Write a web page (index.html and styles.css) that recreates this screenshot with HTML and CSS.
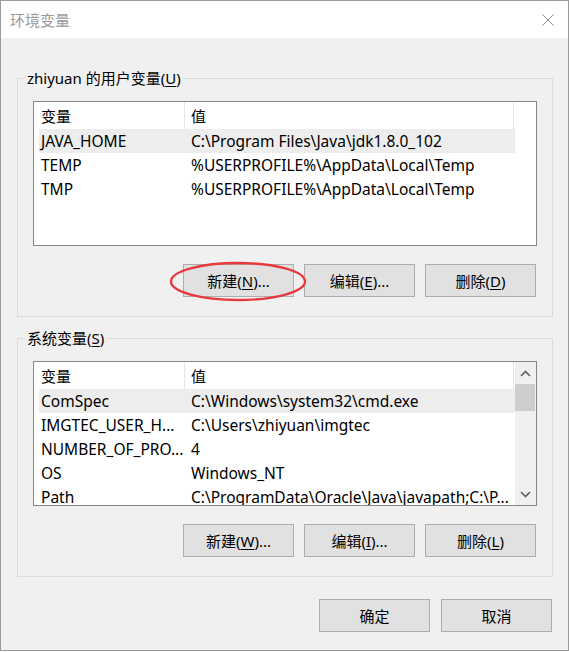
FILE: index.html
```html
<!DOCTYPE html>
<html lang="zh-CN">
<head>
<meta charset="utf-8">
<title>环境变量</title>
<link rel="stylesheet" href="styles.css">
</head>
<body>
<div class="window">
  <div class="titlebar">
    <span class="title">环境变量</span>
    <svg class="close" width="12" height="12" viewBox="0 0 12 12"><path d="M0.5 0.5 L11.5 11.5 M11.5 0.5 L0.5 11.5" stroke="#8a8a8a" stroke-width="1" fill="none"/></svg>
  </div>
  <div class="content">
    <section class="group">
      <div class="group-label">zhiyuan 的用户变量(<u>U</u>)</div>
      <div class="listview">
        <div class="lv-inner">
          <div class="lv-header">
            <div class="col c1">变量</div>
            <div class="col c2">值</div>
          </div>
          <div class="lv-row selected"><div class="col c1">JAVA_HOME</div><div class="col c2">C:\Program Files\Java\jdk1.8.0_102</div></div>
          <div class="lv-row"><div class="col c1">TEMP</div><div class="col c2">%USERPROFILE%\AppData\Local\Temp</div></div>
          <div class="lv-row"><div class="col c1">TMP</div><div class="col c2">%USERPROFILE%\AppData\Local\Temp</div></div>
        </div>
      </div>
      <div class="btn-row">
        <div class="btn-wrap">
          <button class="btn">新建(<u>N</u>)...</button>
          <svg class="annotation" width="138" height="41" viewBox="0 0 138 41"><ellipse cx="69" cy="20.5" rx="67" ry="18.5" stroke="#e8393f" stroke-width="2.4" fill="none"/></svg>
        </div>
        <button class="btn">编辑(<u>E</u>)...</button>
        <button class="btn">删除(<u>D</u>)</button>
      </div>
    </section>

    <section class="group group-system">
      <div class="group-label">系统变量(<u>S</u>)</div>
      <div class="listview">
        <div class="lv-inner">
          <div class="lv-header">
            <div class="col c1">变量</div>
            <div class="col c2">值</div>
          </div>
          <div class="lv-row selected"><div class="col c1">ComSpec</div><div class="col c2">C:\Windows\system32\cmd.exe</div></div>
          <div class="lv-row"><div class="col c1">IMGTEC_USER_H...</div><div class="col c2">C:\Users\zhiyuan\imgtec</div></div>
          <div class="lv-row"><div class="col c1">NUMBER_OF_PRO...</div><div class="col c2">4</div></div>
          <div class="lv-row"><div class="col c1">OS</div><div class="col c2">Windows_NT</div></div>
          <div class="lv-row"><div class="col c1">Path</div><div class="col c2">C:\ProgramData\Oracle\Java\javapath;C:\P...</div></div>
        </div>
        <div class="scrollbar">
          <div class="sb-arrow">
            <svg width="11" height="7" viewBox="0 0 11 7"><path d="M1 6 L5.5 1.5 L10 6" stroke="#606060" stroke-width="1.6" fill="none"/></svg>
          </div>
          <div class="sb-thumb"></div>
          <div class="sb-track"></div>
          <div class="sb-arrow">
            <svg width="11" height="7" viewBox="0 0 11 7"><path d="M1 1 L5.5 5.5 L10 1" stroke="#606060" stroke-width="1.6" fill="none"/></svg>
          </div>
        </div>
      </div>
      <div class="btn-row">
        <button class="btn">新建(<u>W</u>)...</button>
        <button class="btn">编辑(<u>I</u>)...</button>
        <button class="btn">删除(<u>L</u>)</button>
      </div>
    </section>

    <div class="dialog-buttons">
      <button class="btn">确定</button>
      <button class="btn">取消</button>
    </div>
  </div>
</div>
</body>
</html>
```

FILE: styles.css
```css
* { box-sizing: border-box; }

html, body {
  margin: 0;
  padding: 0;
  background: #ffffff;
}

body {
  width: 569px;
  height: 652px;
  overflow: hidden;
  font-family: "Noto Sans", "Noto Sans CJK SC", sans-serif;
  font-size: 15px;
  color: #000;
}

.window {
  width: 569px;
  height: 651px;
  border: 1px solid #9a9a9a;
  background: #f0f0f0;
  display: flex;
  flex-direction: column;
}

.titlebar {
  height: 37px;
  background: #ffffff;
  display: flex;
  align-items: center;
  justify-content: space-between;
  padding: 0 14px 0 9px;
  flex: none;
}

.title {
  color: #9b9b9b;
  font-size: 15px;
  line-height: 20px;
  font-family: "Noto Sans CJK SC", sans-serif;
}

.close { display: block; }

.content {
  flex: 1;
  padding: 40px 15px 0 16px;
}

.group {
  position: relative;
  border: 1px solid #dcdcdc;
  padding: 22px 15px 19px 15px;
}

.group-system { margin-top: 21px; }

.group-label {
  position: absolute;
  top: -11px;
  left: 7px;
  padding: 0 2px;
  background: #f0f0f0;
  line-height: 20px;
}

u { text-underline-offset: 2px; text-decoration-thickness: 1px; }

.listview {
  height: 145px;
  border: 1px solid #828790;
  background: #ffffff;
  display: flex;
  overflow: hidden;
}

.lv-inner {
  flex: 1;
  padding-left: 5px;
  min-width: 0;
}

.lv-header, .lv-row {
  display: flex;
  white-space: nowrap;
}

.lv-header { height: 27px; line-height: 29px; }
.lv-row { height: 24px; line-height: 24px; width: 476px; font-size: 15.5px; }
.lv-row.selected { background: #ededed; }

.col { overflow: hidden; }
.c1 { width: 146px; padding-left: 2px; }
.c2 { width: 330px; padding-left: 6px; }
.lv-header .c1 { border-right: 1px solid #e5e5e5; }
.lv-header .c2 { border-right: 1px solid #e5e5e5; width: 329px; }

.scrollbar {
  width: 21px;
  flex: none;
  background: #f0f0f0;
  display: flex;
  flex-direction: column;
}

.sb-arrow {
  height: 22px;
  display: flex;
  align-items: center;
  justify-content: center;
  flex: none;
}

.sb-thumb {
  height: 27px;
  margin-right: 1px;
  background: #cdcdcd;
  flex: none;
}

.sb-track { flex: 1; }

.btn-row {
  display: flex;
  justify-content: flex-end;
  gap: 10px;
  margin-top: 18px;
  padding-right: 1px;
}

.btn {
  width: 111px;
  height: 33px;
  margin: 0;
  padding: 0;
  border: 1px solid #adadad;
  background: #e1e1e1;
  font-family: inherit;
  font-size: 15px;
  color: #000;
  line-height: 20px;
}

.btn-wrap { position: relative; }

.annotation {
  position: absolute;
  left: -14px;
  top: -3px;
  pointer-events: none;
}

.dialog-buttons {
  display: flex;
  justify-content: flex-end;
  gap: 11px;
  margin-top: 22px;
  padding-right: 1px;
}
```
